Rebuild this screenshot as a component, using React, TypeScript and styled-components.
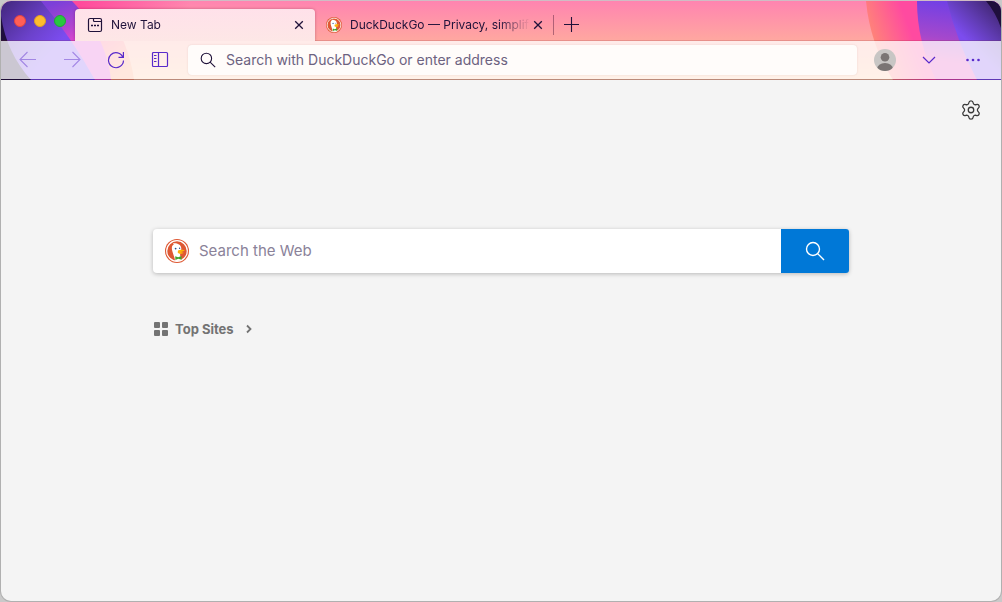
import React from "react";
import styled, { createGlobalStyle, css } from "styled-components";
import { Settings } from "lucide-react";

const GlobalStyle = createGlobalStyle`
  * { box-sizing: border-box; }
  html, body { margin: 0; }
  body {
    background: #c9c9c9;
    font-family: Inter, "Liberation Sans", sans-serif;
    -webkit-font-smoothing: antialiased;
  }
  button { font: inherit; border: 0; padding: 0; background: none; cursor: pointer; }
  svg { display: block; }
`;

const BrowserWindow = styled.div`
  display: flex;
  flex-direction: column;
  min-height: 100vh;
  border: 1px solid #b0b0b0;
  border-top-color: #d0bcc4;
  border-radius: 11px;
  background: #f4f4f4;
  overflow: hidden;
`;

const Chrome = styled.header`
  position: relative;
  isolation: isolate;
  background: linear-gradient(#ff84b0, #ffa8a0 40px, #ffc39a);
`;

const Artwork = styled.svg<{ $side: "left" | "right" }>`
  position: absolute;
  z-index: -1;
  top: 0;
  ${(p) => (p.$side === "left" ? "left: 0;" : "right: 0;")}
`;

const TabStrip = styled.div`
  display: flex;
  align-items: flex-end;
  height: 40px;
  box-shadow: inset 0 -1px 0 rgba(120, 40, 40, 0.18);
`;

const WindowControls = styled.div`
  display: flex;
  align-items: center;
  align-self: flex-start;
  gap: 8px;
  width: 74px;
  height: 40px;
  padding-left: 13px;
`;

const ControlDot = styled.button<{ $fill: string; $edge: string }>`
  width: 12px;
  height: 12px;
  border: 1px solid ${(p) => p.$edge};
  border-radius: 50%;
  background: ${(p) => p.$fill};
`;

const Tabs = styled.div`
  display: flex;
  min-width: 0;
`;

const Tab = styled.div<{ $active?: boolean }>`
  display: flex;
  align-items: center;
  flex: 0 1 240px;
  width: 240px;
  min-width: 0;
  height: 32px;
  padding: 0 ${(p) => (p.$active ? 8 : 9)}px 0 ${(p) => (p.$active ? 12 : 11)}px;
  border-radius: 4px 4px 0 0;
  color: #20123a;
  ${(p) =>
    p.$active &&
    css`
      background: linear-gradient(#ffe1ea, #fde7e6);
      box-shadow: 0 0 3px rgba(80, 0, 40, 0.35);
      clip-path: inset(-4px -4px 0 -4px);
    `}
`;

const TabTitle = styled.span`
  flex: 1;
  min-width: 0;
  margin-left: 8px;
  overflow: hidden;
  font-size: 12px;
  line-height: 16px;
  white-space: nowrap;
  mask-image: linear-gradient(to left, transparent, #000 32px);
`;

const TabClose = styled.button`
  display: grid;
  flex: none;
  place-items: center;
  width: 16px;
  height: 16px;
  color: inherit;
`;

const NewTab = styled.button`
  display: grid;
  place-items: center;
  width: 34px;
  height: 20px;
  margin-bottom: 6px;
  border-left: 1px solid rgba(100, 40, 70, 0.5);
  margin-left: -2px;
  color: #20123a;
`;

const Toolbar = styled.nav`
  display: flex;
  align-items: center;
  height: 38px;
  padding: 0 6px 0 5px;
  background: rgba(255, 255, 255, 0.77);
`;

const ChromeEdge = styled.div`
  height: 1px;
  background: rgba(30, 10, 50, 0.3);
`;

const ToolButton = styled.button<{ $faded?: boolean }>`
  display: grid;
  flex: none;
  place-items: center;
  width: 44px;
  height: 32px;
  color: #592acb;
  opacity: ${(p) => (p.$faded ? 0.45 : 1)};
`;

const AddressBar = styled.label`
  display: flex;
  align-items: center;
  flex: 1;
  min-width: 0;
  height: 30px;
  margin: 0 6px;
  padding: 0 12px;
  gap: 10px;
  border-radius: 4px;
  background: #fffcfa;
  box-shadow: 0 0 2px rgba(120, 60, 60, 0.16);
  color: #20123a;
`;

const AddressInput = styled.input`
  flex: 1;
  min-width: 0;
  padding: 0;
  border: 0;
  outline: 0;
  background: none;
  color: #20123a;
  font: 14px/20px Inter, "Liberation Sans", sans-serif;
  &::placeholder { color: #6c6280; opacity: 1; }
`;

const Page = styled.main`
  display: flex;
  flex-direction: column;
  flex: 1;
`;

const SettingsRow = styled.div`
  display: flex;
  justify-content: flex-end;
  padding: 18px 18px 0;
`;

const SettingsButton = styled.button`
  display: grid;
  place-items: center;
  width: 24px;
  height: 24px;
  color: #3a3a3a;
`;

const Content = styled.div`
  width: 100%;
  max-width: 728px;
  margin: 107px auto 0;
  padding: 0 16px;
`;

const SearchForm = styled.form`
  display: flex;
  height: 44px;
  border-radius: 4px;
  background: #fff;
  box-shadow: 0 1px 4px rgba(0, 0, 0, 0.25);
`;

const SearchField = styled.label`
  display: flex;
  align-items: center;
  flex: 1;
  min-width: 0;
  gap: 10px;
  padding: 0 12px;
`;

const SearchInput = styled(AddressInput)`
  font-size: 15px;
  &::placeholder { color: #8a8299; }
`;

const SearchButton = styled.button`
  display: grid;
  place-items: center;
  width: 68px;
  border-radius: 0 3px 3px 0;
  background: #0078d7;
  color: #fff;
`;

const TopSites = styled.button`
  display: flex;
  align-items: center;
  height: 20px;
  margin-top: 46px;
  color: #737373;
  font-size: 13px;
  font-weight: 700;
  line-height: 20px;
`;

const TopSitesLabel = styled.span`
  margin: 0 11px 0 6px;
`;

function LeftArtwork() {
  return (
    <Artwork $side="left" width="190" height="79" viewBox="1 1 190 79" aria-hidden="true">
      <defs>
        <linearGradient id="l-violet" gradientUnits="userSpaceOnUse" x1="8" y1="2" x2="56" y2="46">
          <stop offset="0" stopColor="#472a86" />
          <stop offset="0.6" stopColor="#6c42cc" />
          <stop offset="1" stopColor="#7c4cf0" />
        </linearGradient>
        <linearGradient id="l-magenta" gradientUnits="userSpaceOnUse" x1="58" y1="2" x2="72" y2="44">
          <stop offset="0" stopColor="#7c40d8" />
          <stop offset="0.6" stopColor="#b044d0" />
          <stop offset="1" stopColor="#e048d0" />
        </linearGradient>
        <linearGradient id="l-glow" gradientUnits="userSpaceOnUse" x1="80" y1="0" x2="190" y2="0">
          <stop offset="0" stopColor="#ff4a9c" />
          <stop offset="1" stopColor="#ff4a9c" stopOpacity="0" />
        </linearGradient>
        <linearGradient id="l-pink" gradientUnits="userSpaceOnUse" x1="90" y1="24" x2="125" y2="70">
          <stop offset="0" stopColor="#ff4a9c" />
          <stop offset="1" stopColor="#ff9a70" />
        </linearGradient>
      </defs>
      <rect x="72" y="1" width="119" height="9" fill="url(#l-glow)" />
      <path d="M72 10 H108 C121 32 131 56 134 80 H80Z" fill="url(#l-pink)" />
      <path d="M40 1 H72 C94 24 108 50 111 80 H60Z" fill="url(#l-magenta)" />
      <path d="M1 1 H41 Q72 38 95 80 H1Z" fill="url(#l-violet)" />
      <path d="M1 16 C5 42 15 62 31 80 H1Z" fill="#1f0f3c" />
    </Artwork>
  );
}

function RightArtwork() {
  return (
    <Artwork $side="right" width="140" height="79" viewBox="861 1 140 79" aria-hidden="true">
      <defs>
        <linearGradient id="r-pink" gradientUnits="userSpaceOnUse" x1="870" y1="32" x2="918" y2="14">
          <stop offset="0" stopColor="#ff8478" />
          <stop offset="0.75" stopColor="#ff4aa0" />
        </linearGradient>
        <linearGradient id="r-magenta" gradientUnits="userSpaceOnUse" x1="940" y1="2" x2="932" y2="60">
          <stop offset="0" stopColor="#7340e4" />
          <stop offset="0.6" stopColor="#a548cc" />
          <stop offset="1" stopColor="#e448b8" />
        </linearGradient>
        <linearGradient id="r-violet" gradientUnits="userSpaceOnUse" x1="994" y1="4" x2="962" y2="36">
          <stop offset="0" stopColor="#412672" />
          <stop offset="0.5" stopColor="#5f3bb0" />
          <stop offset="1" stopColor="#7c4cee" />
        </linearGradient>
      </defs>
      <path d="M866 1 Q870 44 893 80 H1001 V1Z" fill="url(#r-pink)" />
      <path d="M917 1 Q917 42 936 80 H1001 V1Z" fill="url(#r-magenta)" />
      <path d="M947 1 Q957 42 977 80 H1001 V1Z" fill="url(#r-violet)" />
      <path d="M986 1 Q996 13 1001 28 V1Z" fill="#1f0f3c" />
    </Artwork>
  );
}

function DuckLogo({ size }: { size: number }) {
  return (
    <svg width={size} height={size} viewBox="0 0 24 24" aria-hidden="true">
      <circle cx="12" cy="12" r="12" fill="#de5833" />
      <circle cx="12" cy="12" r="10.3" fill="none" stroke="#fff" strokeWidth="1.2" />
      <path
        d="M10.2 21.8 C9.6 18.2 7.9 15 7.2 11.8 C6.4 8 7 6.2 8.9 5.4 L7.8 4.4 C11.4 3.8 15.9 5 16.3 9.2 C16.5 12 14.9 14 15.1 16.2 L16.4 21.2 C14.6 22 12.2 22.2 10.2 21.8Z"
        fill="#fff"
      />
      <path d="M13 11.6 C14.8 10.7 18.8 10.6 19.7 11.5 C18.8 12.4 16.2 12.7 16.2 13.2 C17 13.5 18.6 13.1 18.5 13.9 C17.3 15.1 13.3 15 12.7 13.4Z" fill="#fdb10a" />
      <path d="M10.2 17.2 L13.1 18.2 L16.5 16.9 V20.8 L13.3 19.8 L10.4 20.9Z" fill="#43a52b" />
      <circle cx="10.6" cy="9.6" r="0.9" fill="#2d4f8e" />
      <circle cx="14.6" cy="9.2" r="0.7" fill="#2d4f8e" />
    </svg>
  );
}

function CloseIcon() {
  return (
    <svg width="16" height="16" viewBox="0 0 16 16" fill="none" stroke="currentColor" strokeWidth="1.3">
      <path d="M4.2 4.2 L11.8 11.8 M11.8 4.2 L4.2 11.8" />
    </svg>
  );
}

function ArrowIcon({ forward }: { forward?: boolean }) {
  return (
    <svg width="18" height="18" viewBox="0 0 18 18" fill="none" stroke="currentColor" strokeWidth="1.1">
      {forward ? <path d="M1 8.5 H16.5 M9.5 1 L17 8.5 L9.5 16" /> : <path d="M17 8.5 H1.5 M8.5 1 L1 8.5 L8.5 16" />}
    </svg>
  );
}

function SearchIcon({ size }: { size: number }) {
  return (
    <svg width={size} height={size} viewBox="0 0 16 16" fill="none" stroke="currentColor" strokeWidth="1.1">
      <circle cx="6.4" cy="6.4" r="5.2" />
      <path d="M10.1 10.1 L15.2 15.2" />
    </svg>
  );
}

export default function App() {
  return (
    <BrowserWindow>
      <GlobalStyle />
      <Chrome>
        <LeftArtwork />
        <RightArtwork />
        <TabStrip>
          <WindowControls>
            <ControlDot $fill="#ff5f57" $edge="#e2453f" aria-label="Close window" />
            <ControlDot $fill="#febc2e" $edge="#dfa023" aria-label="Minimize window" />
            <ControlDot $fill="#28c840" $edge="#1eaa32" aria-label="Zoom window" />
          </WindowControls>
          <Tabs role="tablist">
            <Tab $active role="tab" aria-selected="true">
              <svg width="16" height="16" viewBox="0 0 16 16" fill="none" stroke="currentColor" strokeWidth="1.2">
                <path d="M3 1.5 H13 A1.5 1.5 0 0 1 14.5 3 V13 A1.5 1.5 0 0 1 13 14.5 H3 A1.5 1.5 0 0 1 1.5 13 V3 A1.5 1.5 0 0 1 3 1.5Z M6.5 1.5 V3.5 Q6.5 4.5 7.5 4.5 H14.5" />
                <path d="M4 8.5 H6 M7 8.5 H9 M10 8.5 H12" strokeWidth="1.5" />
              </svg>
              <TabTitle>New Tab</TabTitle>
              <TabClose aria-label="Close New Tab"><CloseIcon /></TabClose>
            </Tab>
            <Tab role="tab" aria-selected="false">
              <DuckLogo size={16} />
              <TabTitle>DuckDuckGo — Privacy, simplified.</TabTitle>
              <TabClose aria-label="Close DuckDuckGo"><CloseIcon /></TabClose>
            </Tab>
          </Tabs>
          <NewTab aria-label="Open a new tab">
            <svg width="16" height="16" viewBox="0 0 16 16" fill="none" stroke="currentColor" strokeWidth="1.1">
              <path d="M8.5 0 V15 M1 7.5 H16" />
            </svg>
          </NewTab>
        </TabStrip>
        <Toolbar aria-label="Navigation">
          <ToolButton $faded aria-label="Back"><ArrowIcon /></ToolButton>
          <ToolButton $faded aria-label="Forward"><ArrowIcon forward /></ToolButton>
          <ToolButton aria-label="Reload">
            <svg width="18" height="18" viewBox="0 0 18 18" fill="none" stroke="currentColor" strokeWidth="1.2">
              <path d="M16 6.5 A7.5 7.5 0 1 0 16.5 9.5 M16.4 1 V6.4 H11.5" />
            </svg>
          </ToolButton>
          <ToolButton aria-label="Sidebar">
            <svg width="18" height="18" viewBox="0 0 18 18" fill="none" stroke="currentColor" strokeWidth="1.2">
              <rect x="1.5" y="1.5" width="15" height="14" rx="1" />
              <path d="M7.5 1.5 V15.5 M3 4.5 H5.5 M3 7.5 H5.5 M3 10.5 H5.5" />
            </svg>
          </ToolButton>
          <AddressBar>
            <SearchIcon size={16} />
            <AddressInput type="text" aria-label="Address" placeholder="Search with DuckDuckGo or enter address" />
          </AddressBar>
          <ToolButton aria-label="Account">
            <svg width="22" height="22" viewBox="0 0 22 22">
              <defs><clipPath id="avatar"><circle cx="11" cy="11" r="11" /></clipPath></defs>
              <g clipPath="url(#avatar)">
                <rect width="22" height="22" fill="#c8c6c4" />
                <circle cx="11" cy="8.2" r="4.3" fill="#7a7574" />
                <ellipse cx="11" cy="20" rx="8" ry="6" fill="#7a7574" />
              </g>
            </svg>
          </ToolButton>
          <ToolButton aria-label="List all tabs">
            <svg width="14" height="14" viewBox="0 0 14 14" fill="none" stroke="currentColor" strokeWidth="1.2">
              <path d="M1 4 L7 10 L13 4" />
            </svg>
          </ToolButton>
          <ToolButton aria-label="Menu">
            <svg width="16" height="16" viewBox="0 0 16 16" fill="currentColor">
              <circle cx="2.5" cy="8" r="1.3" /><circle cx="8" cy="8" r="1.3" /><circle cx="13.5" cy="8" r="1.3" />
            </svg>
          </ToolButton>
        </Toolbar>
        <ChromeEdge />
      </Chrome>
      <Page>
        <SettingsRow>
          <SettingsButton aria-label="Personalize">
            <Settings size={22} strokeWidth={1.4} />
          </SettingsButton>
        </SettingsRow>
        <Content>
          <SearchForm role="search" onSubmit={(e: React.FormEvent) => e.preventDefault()}>
            <SearchField>
              <DuckLogo size={24} />
              <SearchInput type="text" aria-label="Search the Web" placeholder="Search the Web" />
            </SearchField>
            <SearchButton type="submit" aria-label="Search"><SearchIcon size={20} /></SearchButton>
          </SearchForm>
          <TopSites aria-expanded="false">
            <svg width="16" height="16" viewBox="0 0 16 16" fill="currentColor" aria-hidden="true">
              <rect x="1" y="1" width="6" height="6" rx="1" /><rect x="9" y="1" width="6" height="6" rx="1" />
              <rect x="1" y="9" width="6" height="6" rx="1" /><rect x="9" y="9" width="6" height="6" rx="1" />
            </svg>
            <TopSitesLabel>Top Sites</TopSitesLabel>
            <svg width="8" height="10" viewBox="0 0 8 10" fill="none" stroke="currentColor" strokeWidth="1.8" aria-hidden="true">
              <path d="M2 1.5 L5.5 5 L2 8.5" />
            </svg>
          </TopSites>
        </Content>
      </Page>
    </BrowserWindow>
  );
}
